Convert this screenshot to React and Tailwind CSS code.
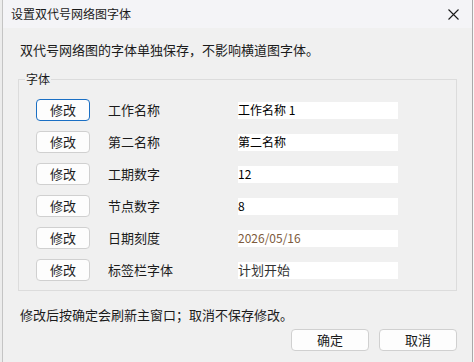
import React from 'react';

const ui = { fontFamily: '"Noto Sans CJK SC", "Noto Sans", sans-serif' };

const rows = [
    { label: '工作名称', value: '工作名称 1', cls: 'text-black', focus: true },
    { label: '第二名称', value: '第二名称', cls: 'text-black' },
    { label: '工期数字', value: '12', cls: 'text-black' },
    { label: '节点数字', value: '8', cls: 'text-black' },
    { label: '日期刻度', value: '2026/05/16', cls: 'text-[#7d5b3c]' },
    { label: '标签栏字体', value: '计划开始', cls: 'text-[#333333] text-[13px]' },
];

function CloseIcon() {
    return (
        <svg width="11" height="11" viewBox="0 0 11 11" fill="none" stroke="#1a1a1a" strokeWidth="1.1">
            <path d="M0.5 0.5 L10.5 10.5 M10.5 0.5 L0.5 10.5" />
        </svg>
    );
}

function Button({ children, width, focus }) {
    return (
        <button
            className={`h-[22px] ${width} rounded-[4px] border bg-[#fdfdfd] text-[13px] leading-none text-[#1b1b1b] pb-[1px] ${focus ? 'border-[#1a6fc4]' : 'border-[#d0d0d0]'}`}
        >
            {children}
        </button>
    );
}

export default function App() {
    return (
        <div className="flex w-[474px] h-[362px] overflow-hidden bg-[#f0f0f0]" style={ui}>
            <div className="w-[2px] shrink-0 bg-[#ececec]" />
            <div className="flex flex-col w-[471px] h-full border-l border-r border-l-[#c4c4c4] border-r-[#a9a9a9] bg-[#f0f0f0]">
                {/* title bar */}
                <div className="flex items-center justify-between h-[28px] bg-[#f4f4f7] pl-[8px] pr-[8px]">
                    <span className="text-[12px] leading-[16px] text-[#1a1a1a]">设置双代号网络图字体</span>
                    <span className="flex items-center justify-center w-[16px] mr-[3px]">
                        <CloseIcon />
                    </span>
                </div>

                <div className="flex flex-col px-[15px]">
                    <p className="mt-[13px] ml-[2px] text-[13px] leading-[18px] text-[#1b1b1b]">
                        双代号网络图的字体单独保存，不影响横道图字体。
                    </p>

                    <fieldset className="mt-[12px] border border-[#dcdcdc] pt-[12px] pb-[9px]">
                        <legend className="ml-[6px] px-[1px] text-[12px] leading-[16px] text-[#1b1b1b]">字体</legend>
                        <div className="flex flex-col gap-[10px] pl-[17px]">
                            {rows.map((row) => (
                                <div key={row.label} className="flex items-center h-[22px]">
                                    <Button width="w-[54px]" focus={row.focus}>修改</Button>
                                    <span className="ml-[18px] w-[130px] text-[13px] leading-[18px] text-[#1b1b1b]">
                                        {row.label}
                                    </span>
                                    <div className={`flex items-center w-[160px] h-[17px] bg-white text-[12px] leading-[14px] ${row.cls}`}>
                                        {row.value}
                                    </div>
                                </div>
                            ))}
                        </div>
                    </fieldset>

                    <p className="mt-[15px] ml-[2px] text-[13px] leading-[18px] text-[#1b1b1b]">
                        修改后按确定会刷新主窗口；取消不保存修改。
                    </p>

                    <div className="flex justify-end gap-[10px] mt-[5px]">
                        <Button width="w-[78px]">确定</Button>
                        <Button width="w-[78px]">取消</Button>
                    </div>
                </div>
            </div>
            <div className="flex-1 bg-[#f7f7f7]" />
        </div>
    );
}
